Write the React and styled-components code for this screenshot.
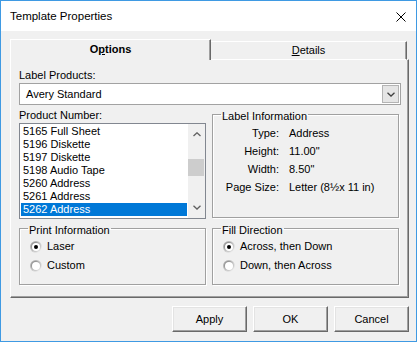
import React from 'react';
import styled, { createGlobalStyle } from 'styled-components';

const Global = createGlobalStyle`
  html, body { margin: 0; padding: 0; background: #ffffff; }
  body { font-family: "Liberation Sans", Arial, sans-serif; font-size: 11px; color: #000; }
  *, *::before, *::after { box-sizing: border-box; }
`;

const Window = styled.div`
  width: 417px;
  height: 342px;
  border: 1px solid #3f9ae3;
  background: #f0f0f0;
  display: flex;
  flex-direction: column;
`;

const TitleBar = styled.div`
  height: 30px;
  flex: none;
  background: #ffffff;
  display: flex;
  align-items: center;
  justify-content: space-between;
  padding: 1px 10px 0 9px;
  font-size: 11.5px;
  line-height: 13px;
`;

const Body = styled.div`
  flex: 1;
  padding: 8px 7px 0 9px;
  display: flex;
  flex-direction: column;
`;

const TabRow = styled.div`
  display: flex;
  align-items: flex-end;
  height: 21px;
  margin-bottom: -1px;
  position: relative;
  z-index: 1;
`;

const Tab = styled.div`
  width: ${p => (p.$active ? 201 : 196)}px;
  height: ${p => (p.$active ? 21 : 19)}px;
  background: #f0f0f0;
  border-top: 1px solid #ffffff;
  border-left: ${p => (p.$active ? '1px solid #ffffff' : 'none')};
  border-right: 1px solid #696969;
  border-bottom: ${p => (p.$active ? 'none' : '1px solid #ffffff')};
  box-shadow: inset -1px 0 0 #a0a0a0;
  text-align: center;
  font-weight: ${p => (p.$active ? 700 : 400)};
  padding-top: ${p => (p.$active ? 3 : 2)}px;
  line-height: 13px;
`;

const Mnemonic = styled.span`
  text-decoration: underline;
`;

const Panel = styled.div`
  width: 399px;
  height: 239px;
  border: 1px solid;
  border-color: #ffffff #696969 #696969 #ffffff;
  box-shadow: inset -1px -1px 0 #a0a0a0;
  padding: 9px 7px 12px 8px;
  display: flex;
  flex-direction: column;
`;

const FieldLabel = styled.div`
  line-height: 13px;
  height: 13px;
  white-space: nowrap;
`;

const Combo = styled.div`
  margin-top: 1px;
  width: 382px;
  height: 22px;
  border: 1px solid #a2a2a2;
  background: #ffffff;
  display: flex;
  align-items: center;
  padding: 1px 1px 1px 6px;
`;

const ComboText = styled.span`
  flex: 1;
  line-height: 13px;
`;

const DropButton = styled.div`
  width: 17px;
  height: 18px;
  background: #e5e5e5;
  border: 1px solid #b4b4b4;
  display: flex;
  align-items: center;
  justify-content: center;
`;

const TopRow = styled.div`
  margin-top: 1px;
  display: grid;
  grid-template-columns: 187px 187px;
  column-gap: 6px;
  align-items: start;
`;

const BottomRow = styled(TopRow)`
  margin-top: 1px;
`;

const Column = styled.div`
  padding-top: 3px;
  display: flex;
  flex-direction: column;
`;

const ListBox = styled.div`
  margin-top: 1px;
  height: 96px;
  border: 1px solid #828790;
  background: #ffffff;
  display: flex;
`;

const Items = styled.div`
  flex: 1;
  padding: 1px;
  overflow: hidden;
`;

const Item = styled.div`
  height: 13px;
  line-height: 13px;
  padding-left: 2px;
  white-space: nowrap;
  background: ${p => (p.$selected ? '#0078d7' : 'transparent')};
  color: ${p => (p.$selected ? '#ffffff' : '#000000')};
`;

const ScrollBar = styled.div`
  width: 17px;
  background: #f0f0f0;
  display: flex;
  flex-direction: column;
`;

const ScrollArrow = styled.div`
  height: 17px;
  display: flex;
  align-items: ${p => (p.$down ? 'flex-start' : 'flex-end')};
  justify-content: center;
  padding: ${p => (p.$down ? '4px 0 0' : '0 0 4px')};
`;

const Track = styled.div`
  flex: 1;
  padding: 0 1px 0 0;
`;

const Thumb = styled.div`
  margin-top: ${p => p.$offset}px;
  height: 17px;
  background: #cdcdcd;
`;

const Group = styled.fieldset`
  margin: 0;
  padding: 0;
  min-width: 0;
  border: 1px solid #a0a0a0;
  box-shadow: inset 1px 1px 0 #ffffff, 1px 1px 0 #ffffff;
  height: ${p => p.$h}px;
`;

const Caption = styled.legend`
  margin-left: 8px;
  padding: 3px 1px 0;
  line-height: 14px;
  font-size: 11px;
`;

const InfoGrid = styled.div`
  padding-top: 1px;
  display: grid;
  grid-template-columns: 66px auto;
  column-gap: 10px;
  grid-auto-rows: 18px;
  align-items: center;
  line-height: 13px;
`;

const InfoKey = styled.span`
  text-align: right;
  white-space: nowrap;
`;

const InfoValue = styled.span`
  white-space: nowrap;
`;

const RadioRow = styled.label`
  height: 19px;
  display: flex;
  align-items: center;
  gap: 5px;
  padding-left: 10px;
  line-height: 13px;
`;

const ButtonRow = styled.div`
  margin-top: 8px;
  display: flex;
  justify-content: flex-end;
  gap: 6px;
`;

const Button = styled.div`
  width: 75px;
  height: 26px;
  background: #f0f0f0;
  border: 1px solid;
  border-color: #ffffff #696969 #696969 #ffffff;
  box-shadow: inset -1px -1px 0 #a0a0a0, inset 1px 1px 0 #e3e3e3;
  display: flex;
  align-items: center;
  justify-content: center;
  line-height: 13px;
`;

const CloseIcon = () => (
  <svg width="10" height="10" viewBox="0 0 10 10">
    <path d="M0.5 0.5 L9.5 9.5 M9.5 0.5 L0.5 9.5" stroke="#000" strokeWidth="1" fill="none" />
  </svg>
);

const Chevron = ({ up, color = '#606060', w = 7, h = 4 }) => (
  <svg width={w + 1} height={h + 1} viewBox={`0 0 ${w + 1} ${h + 1}`}>
    <polyline
      points={up ? `0.5,${h} ${(w + 1) / 2},0.8 ${w + 0.5},${h}` : `0.5,0.8 ${(w + 1) / 2},${h} ${w + 0.5},0.8`}
      fill="none"
      stroke={color}
      strokeWidth="1.3"
    />
  </svg>
);

const Radio = ({ checked }) => (
  <svg width="12" height="12" viewBox="0 0 12 12">
    <defs>
      <linearGradient id="rOuter" x1="0" y1="0" x2="1" y2="1">
        <stop offset="0" stopColor="#9a9a9a" />
        <stop offset="1" stopColor="#ffffff" />
      </linearGradient>
      <linearGradient id="rInner" x1="0" y1="0" x2="1" y2="1">
        <stop offset="0" stopColor="#7a7a7a" />
        <stop offset="1" stopColor="#eaeaea" />
      </linearGradient>
    </defs>
    <circle cx="6" cy="6" r="6" fill="url(#rOuter)" />
    <circle cx="6" cy="6" r="5" fill="url(#rInner)" />
    <circle cx="6" cy="6" r="4" fill="#ffffff" />
    {checked && <circle cx="6" cy="6" r="2" fill="#000000" />}
  </svg>
);

const products = [
  '5165 Full Sheet',
  '5196 Diskette',
  '5197 Diskette',
  '5198 Audio Tape',
  '5260 Address',
  '5261 Address',
  '5262 Address',
];

const info = [
  ['Type:', 'Address'],
  ['Height:', '11.00"'],
  ['Width:', '8.50"'],
  ['Page Size:', 'Letter (8½x 11 in)'],
];

export default function App() {
  return (
    <>
      <Global />
      <Window>
        <TitleBar>
          <span>Template Properties</span>
          <CloseIcon />
        </TitleBar>
        <Body>
          <TabRow>
            <Tab $active>
              O<Mnemonic>p</Mnemonic>tions
            </Tab>
            <Tab>
              <Mnemonic>D</Mnemonic>etails
            </Tab>
          </TabRow>
          <Panel>
            <FieldLabel>Label Products:</FieldLabel>
            <Combo>
              <ComboText>Avery Standard</ComboText>
              <DropButton>
                <Chevron color="#404040" />
              </DropButton>
            </Combo>
            <TopRow>
              <Column>
                <FieldLabel>Product Number:</FieldLabel>
                <ListBox>
                  <Items>
                    {products.map((p, i) => (
                      <Item key={p} $selected={i === products.length - 1}>{p}</Item>
                    ))}
                  </Items>
                  <ScrollBar>
                    <ScrollArrow>
                      <Chevron up />
                    </ScrollArrow>
                    <Track>
                      <Thumb $offset={18} />
                    </Track>
                    <ScrollArrow $down>
                      <Chevron />
                    </ScrollArrow>
                  </ScrollBar>
                </ListBox>
              </Column>
              <Group $h={112}>
                <Caption>Label Information</Caption>
                <InfoGrid>
                  {info.map(([k, v]) => (
                    <React.Fragment key={k}>
                      <InfoKey>{k}</InfoKey>
                      <InfoValue>{v}</InfoValue>
                    </React.Fragment>
                  ))}
                </InfoGrid>
              </Group>
            </TopRow>
            <BottomRow>
              <Group $h={65}>
                <Caption>Print Information</Caption>
                <RadioRow><Radio checked />Laser</RadioRow>
                <RadioRow><Radio />Custom</RadioRow>
              </Group>
              <Group $h={65}>
                <Caption>Fill Direction</Caption>
                <RadioRow><Radio checked />Across, then Down</RadioRow>
                <RadioRow><Radio />Down, then Across</RadioRow>
              </Group>
            </BottomRow>
          </Panel>
          <ButtonRow>
            <Button>Apply</Button>
            <Button>OK</Button>
            <Button>Cancel</Button>
          </ButtonRow>
        </Body>
      </Window>
    </>
  );
}
